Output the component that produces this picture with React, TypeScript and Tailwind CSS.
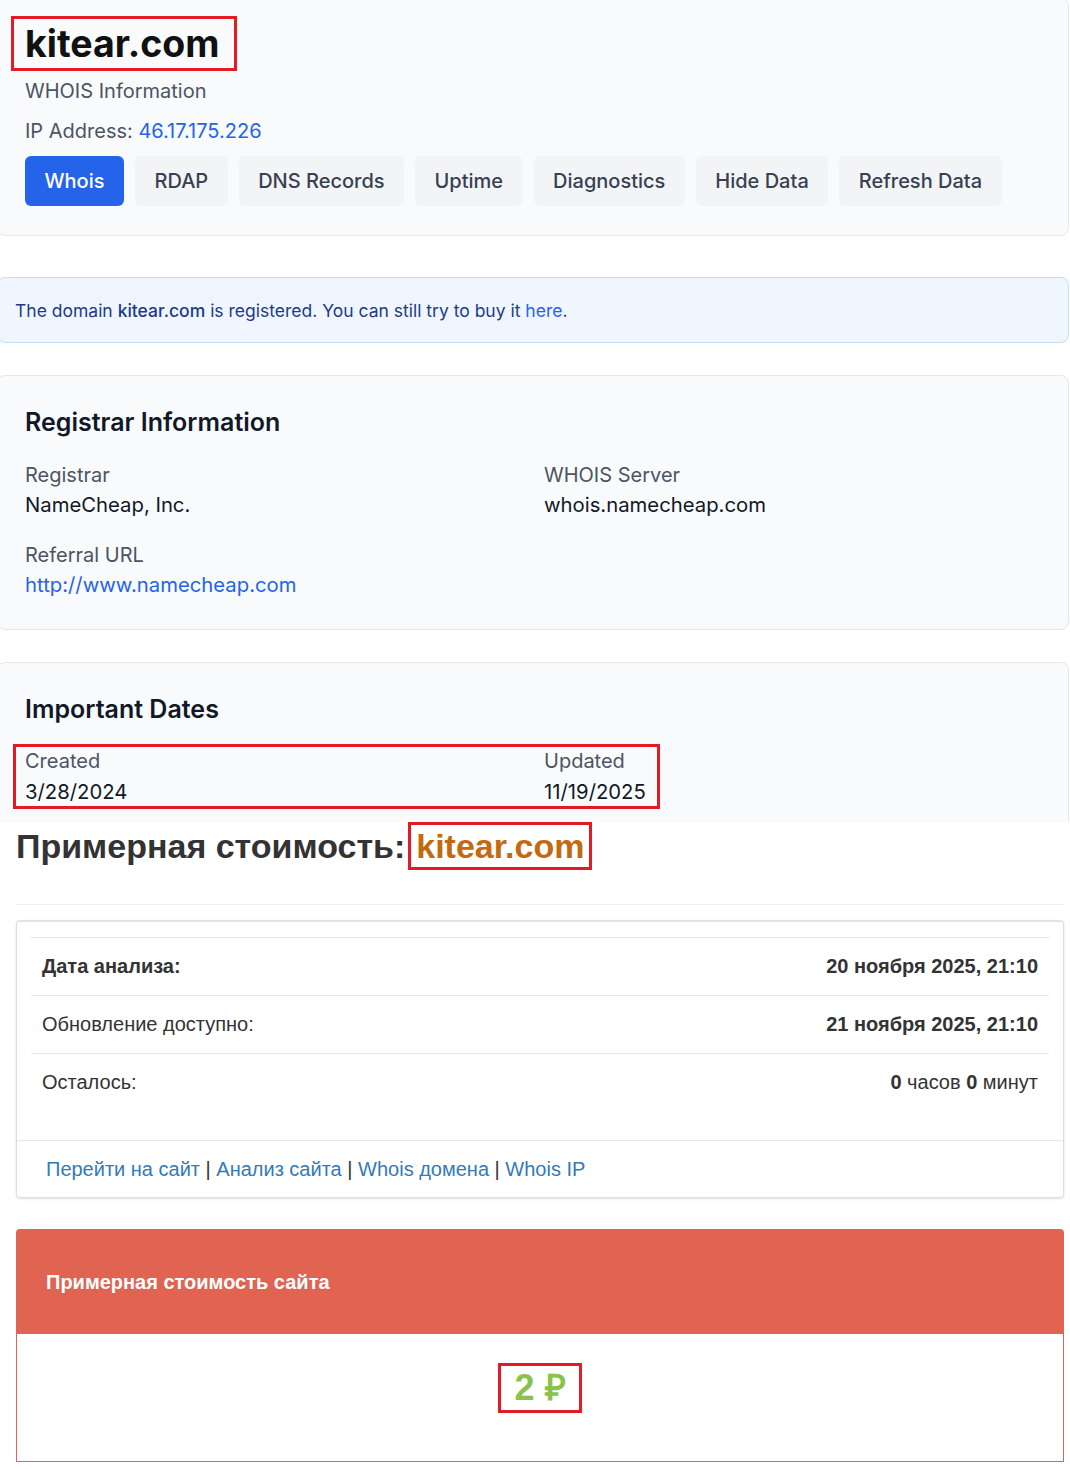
import React from "react"

const tabs = ["Whois", "RDAP", "DNS Records", "Uptime", "Diagnostics", "Hide Data", "Refresh Data"]

function Card({ children, className = "" }: { children: React.ReactNode; className?: string }) {
  return (
    <div className={`-ml-[3px] w-[1072px] rounded-lg border border-[#e5e7eb] bg-[#f9fafb] pl-[27px] ${className}`}>
      {children}
    </div>
  )
}

function Field({ label, children }: { label: string; children: React.ReactNode }) {
  return (
    <div className="leading-[30px]">
      <div className="text-[20px] text-[#4b5563]">{label}</div>
      <div className="text-[20.3px] text-[#111827]">{children}</div>
    </div>
  )
}

export default function App() {
  return (
    <div className="w-[1070px] overflow-hidden bg-white">
      {/* Whois part */}
      <div className="font-['Inter','Noto_Sans',sans-serif]">
        <Card className="-mt-[2px] pt-[17px] pb-[29px]">
          <h1 className="-ml-[14px] inline-block border-[3px] border-[#e21b25] pl-[11px] pr-[14px] text-[37.5px] font-bold leading-[49px] text-[#111111]">
            kitear.com
          </h1>
          <p className="mt-[6px] text-[20px] leading-[28px] text-[#4b5563]">WHOIS Information</p>
          <p className="mt-3 text-[20px] leading-[28px] text-[#4b5563]">
            IP Address: <span className="text-[#2563eb]">46.17.175.226</span>
          </p>
          <div className="mt-[11px] flex gap-[11px]">
            {tabs.map((t, i) => (
              <button
                key={t}
                className={`h-[50px] rounded-md px-[19.5px] text-[20px] font-medium ${
                  i === 0 ? "bg-[#2563eb] text-white" : "bg-[#f3f4f6] text-[#374151]"
                }`}
              >
                {t}
              </button>
            ))}
          </div>
        </Card>

        <div className="mt-[41px] -ml-[3px] w-[1072px] rounded-lg border border-[#c7dcf5] bg-[#eff6ff] pt-[20px] pb-[19px] pl-[17px] text-[17.5px] leading-[25px] text-[#1e3a8a]">
          The domain <span className="font-medium">kitear.com</span> is registered. You can still try to buy it{" "}
          <span className="text-[#2563eb]">here</span>.
        </div>

        <Card className="mt-8 pt-[30px] pb-[29px]">
          <h2 className="text-[25px] font-semibold leading-8 text-[#111827]">Registrar Information</h2>
          <div className="mt-[22px] grid grid-cols-[519px_1fr] gap-y-5">
            <Field label="Registrar">NameCheap, Inc.</Field>
            <Field label="WHOIS Server">whois.namecheap.com</Field>
            <Field label="Referral URL">
              <span className="text-[#2563eb]">http://www.namecheap.com</span>
            </Field>
          </div>
        </Card>

        <Card className="mt-8 h-[160px] overflow-hidden rounded-b-none border-b-0 pt-[30px]">
          <h2 className="text-[25px] font-semibold leading-8 text-[#111827]">Important Dates</h2>
          <div className="mt-[19px] -ml-[12px] inline-grid grid-cols-[519px_auto] border-[3px] border-[#e21b25] pl-[9px] pr-[11px] leading-[29.5px]">
            <div className="text-[20px] text-[#4b5563]">Created</div>
            <div className="text-[20px] text-[#4b5563]">Updated</div>
            <div className="text-[20.3px] text-[#111827]">3/28/2024</div>
            <div className="text-[20.3px] text-[#111827]">11/19/2025</div>
          </div>
        </Card>
      </div>

      {/* Cost part */}
      <div className="pl-4 pr-[6px] font-['Liberation_Sans',Arial,sans-serif] text-[#333333]">
        <h1 className="flex items-center text-[34px] font-bold leading-[42px]">
          <span>Примерная стоимость:</span>
          <span className="ml-[3px] inline-block border-[3px] border-[#e21b25] px-[5px] text-[#c4690f]">kitear.com</span>
        </h1>

        <hr className="mt-[34px] border-t border-[#eeeeee]" />

        <div className="mt-[15px] rounded border border-[#dddddd] border-t-2 border-t-[#e2e2e2] shadow-sm">
          <div className="px-[14px] pt-[15px] pb-[15px]">
            <table className="mb-[14px] w-full text-[20px] leading-[29px]">
              <tbody>
                <tr className="border-t border-[#e6e6e6]">
                  <td className="px-[11px] py-[14px] font-bold">Дата анализа:</td>
                  <td className="px-[11px] py-[14px] text-right font-bold">20 ноября 2025, 21:10</td>
                </tr>
                <tr className="border-t border-[#e6e6e6]">
                  <td className="px-[11px] py-[14px]">Обновление доступно:</td>
                  <td className="px-[11px] py-[14px] text-right font-bold">21 ноября 2025, 21:10</td>
                </tr>
                <tr className="border-t border-[#e6e6e6]">
                  <td className="px-[11px] py-[14px]">Осталось:</td>
                  <td className="px-[11px] py-[14px] text-right">
                    <b>0</b> часов <b>0</b> минут
                  </td>
                </tr>
              </tbody>
            </table>
          </div>
          <div className="border-t border-[#e6e6e6] px-[29px] py-[14px] text-[20px] leading-[28px]">
            <span className="text-[#337ab7]">Перейти на сайт</span> | <span className="text-[#337ab7]">Анализ сайта</span> |{" "}
            <span className="text-[#337ab7]">Whois домена</span> | <span className="text-[#337ab7]">Whois IP</span>
          </div>
        </div>

        <div className="mt-[31px] mb-[7px] overflow-hidden rounded-t">
          <div className="flex h-[105px] items-center bg-[#e16352] px-[30px] text-[20px] font-bold text-white">
            Примерная стоимость сайта
          </div>
          <div className="flex justify-center border border-t-0 border-[#e16352] pt-[29px] pb-[48px]">
            <span className="inline-block border-[3px] border-[#e21b25] px-[13px] text-[36px] font-bold leading-[44px] text-[#8bc34a]">
              2 ₽
            </span>
          </div>
        </div>
      </div>
    </div>
  )
}
